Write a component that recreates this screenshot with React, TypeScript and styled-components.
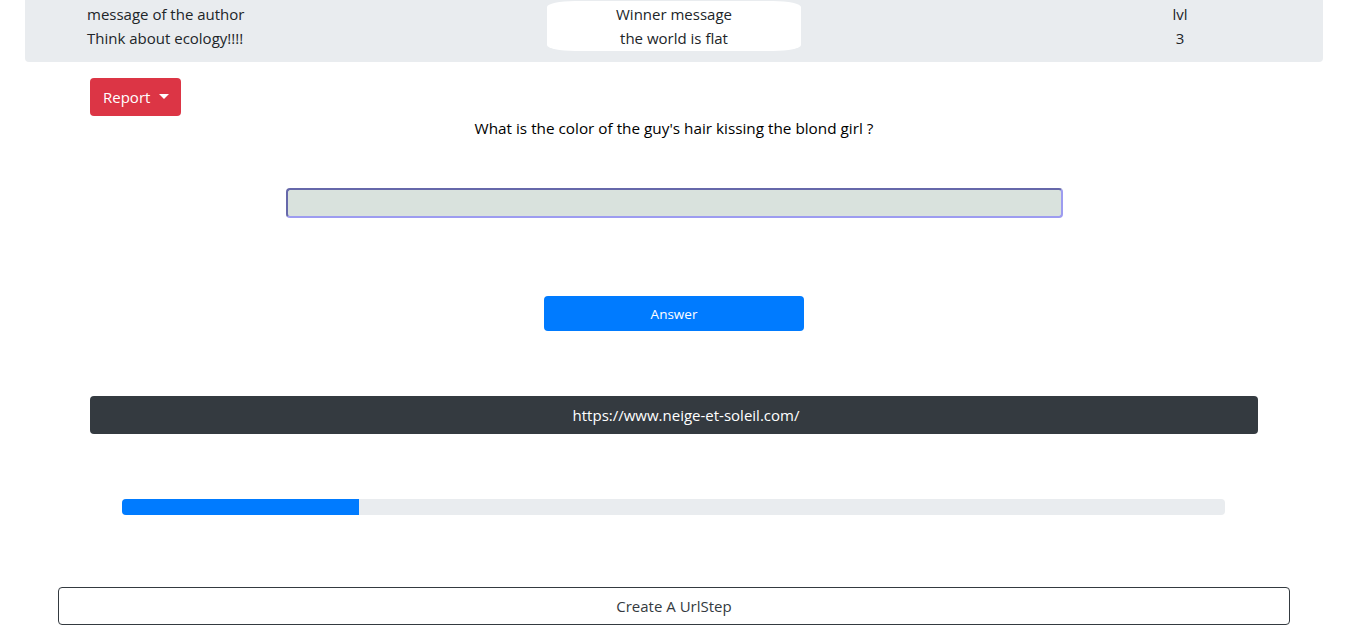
import React from 'react'
import styled, { createGlobalStyle } from 'styled-components'

const GlobalStyle = createGlobalStyle`
  body {
    margin: 0;
    background: #fff;
    font-family: 'Segoe UI', 'Open Sans', 'Liberation Sans', sans-serif;
    font-size: 15px;
    line-height: 24px;
    color: #212529;
  }
`

const Page = styled.div`
  display: flex;
  flex-direction: column;
`

const Jumbotron = styled.div`
  margin: 0 29px 0 25px;
  padding: 2px 123px 11px 62px;
  background: #e9ecef;
  border-radius: 0 0 4px 4px;
  display: grid;
  grid-template-columns: 460px 254px 1fr;
`

const Column = styled.div``

const WinnerBox = styled.div`
  background: #fff;
  border-radius: 28px / 6px;
  padding: 1px 0 1px;
  margin-top: -1px;
  text-align: center;
`

const LevelBox = styled.div`
  justify-self: end;
  width: 40px;
  text-align: center;
`

const Line = styled.div`
  height: 24px;
  white-space: nowrap;
`

const Main = styled.div`
  padding: 16px 94px 0 90px;
  display: flex;
  flex-direction: column;
`

const ReportButton = styled.button`
  align-self: flex-start;
  display: flex;
  align-items: center;
  gap: 9px;
  height: 38px;
  padding: 0 13px 0 13px;
  width: 91px;
  border: none;
  border-radius: 4px;
  background: #dc3545;
  color: #fff;
  font: inherit;
  cursor: pointer;
`

const Caret = styled.span`
  width: 0;
  height: 0;
  border-left: 5px solid transparent;
  border-right: 5px solid transparent;
  border-top: 5px solid #fff;
  margin-top: -2px;
`

const Question = styled.p`
  margin: 0;
  text-align: center;
  font-size: 15.3px;
  color: #000;
`

const Center = styled.div<{ top: number }>`
  display: flex;
  justify-content: center;
  margin-top: ${p => p.top}px;
`

const AnswerInput = styled.input`
  width: 777px;
  height: 30px;
  box-sizing: border-box;
  background: #d9e2dd;
  border: 2px solid;
  border-color: #6668aa #9d9cf0 #9d9cf0 #6668aa;
  border-radius: 4px;
  outline: none;
`

const AnswerButton = styled.button`
  width: 260px;
  height: 35px;
  border: none;
  border-radius: 4px;
  background: #007bff;
  color: #fff;
  font-family: inherit;
  font-size: 13.5px;
  cursor: pointer;
`

const UrlBar = styled.div`
  margin-top: 65px;
  height: 38px;
  display: flex;
  align-items: center;
  justify-content: center;
  padding-left: 24px;
  border-radius: 4px;
  background: #343a40;
  color: #fff;
`

const Progress = styled.div`
  margin: 65px 33px 0 32px;
  height: 16px;
  border-radius: 4px;
  background: #e9ecef;
  overflow: hidden;
`

const ProgressFill = styled.div`
  height: 100%;
  background: #007bff;
`

const Footer = styled.div`
  padding: 72px 62px 0 58px;
`

const CreateButton = styled.button`
  width: 100%;
  height: 38px;
  border: 1px solid #343a40;
  border-radius: 4px;
  background: #fff;
  color: #343a40;
  font: inherit;
  cursor: pointer;
`

const App: React.FC = () => {
  const progress = 21.5

  return (
    <Page>
      <GlobalStyle />
      <Jumbotron>
        <Column>
          <Line>message of the author</Line>
          <Line>Think about ecology!!!!</Line>
        </Column>
        <WinnerBox>
          <Line>Winner message</Line>
          <Line>the world is flat</Line>
        </WinnerBox>
        <LevelBox>
          <Line>lvl</Line>
          <Line>3</Line>
        </LevelBox>
      </Jumbotron>
      <Main>
        <ReportButton>
          Report
          <Caret />
        </ReportButton>
        <Question>What is the color of the guy's hair kissing the blond girl ?</Question>
        <Center top={48}>
          <AnswerInput type="text" />
        </Center>
        <Center top={78}>
          <AnswerButton>Answer</AnswerButton>
        </Center>
        <UrlBar>https://www.neige-et-soleil.com/</UrlBar>
        <Progress>
          <ProgressFill style={{ width: `${progress}%` }} />
        </Progress>
      </Main>
      <Footer>
        <CreateButton>Create A UrlStep</CreateButton>
      </Footer>
    </Page>
  )
}

export default App
